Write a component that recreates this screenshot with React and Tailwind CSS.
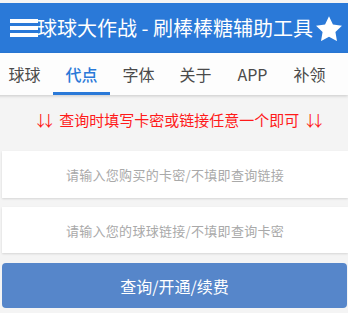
import { useState } from "react";

const tabs = ["球球", "代点", "字体", "关于", "APP", "补领"];

function MenuIcon() {
  return (
    <svg width="28" height="19" viewBox="0 0 28 19" className="shrink-0">
      <rect x="0" y="0" width="28" height="4" fill="#fff" />
      <rect x="0" y="7" width="28" height="4" fill="#fff" />
      <rect x="0" y="14" width="28" height="4" fill="#fff" />
    </svg>
  );
}

function StarIcon() {
  return (
    <svg width="26" height="25" viewBox="0.5 0.3 23 22.2" className="shrink-0">
      <path
        d="M12 0.6l3.5 7.3 8 1.1-5.8 5.6 1.4 8-7.1-3.8-7.1 3.8 1.4-8L0.5 9l8-1.1z"
        fill="#fff"
      />
    </svg>
  );
}

export default function App() {
  const [active, setActive] = useState(1);

  return (
    <div className="w-[348px] h-[313px] overflow-hidden bg-[#f4f4f4] font-['Noto_Sans_CJK_SC','Noto_Sans',sans-serif]">
      <div className="h-[3px]" />
      <header className="h-[50px] bg-[#2a79d8] flex items-center pl-[10px] pr-[6px]">
        <MenuIcon />
        <h1 className="text-white text-[20px] leading-none whitespace-nowrap -ml-[1px] flex-1">
          球球大作战 - 刷棒棒糖辅助工具
        </h1>
        <StarIcon />
      </header>

      <nav className="h-[42px] bg-[#fdfdfd] shadow-[0_1px_3px_rgba(0,0,0,0.18)] relative flex -ml-[4px]">
        {tabs.map((t, i) => (
          <button
            key={t}
            onClick={() => setActive(i)}
            className={
              "w-[57px] shrink-0 h-full relative text-[16px] " +
              (i === active ? "text-[#2a79d8] font-medium" : "text-[#4a4a4a]")
            }
          >
            {t}
            {i === active && (
              <span className="absolute left-0 right-0 bottom-[0px] h-[3px] bg-[#2a79d8]" />
            )}
          </button>
        ))}
      </nav>

      <p className="text-center text-[15px] text-[#ff1a1a] mt-[14px] leading-[22px] pl-[4px]">
        <span className="tracking-[-7px]">↓↓</span>
        <span className="ml-[10px]">查询时填写卡密或链接任意一个即可 </span>
        <span className="tracking-[-7px]">↓↓</span>
      </p>

      <div className="ml-[2px] mt-[20px] flex flex-col gap-[9px]">
        <input
          className="h-[47px] bg-white text-center text-[13px] tracking-[0.3px] outline-none shadow-[0_1px_2px_rgba(0,0,0,0.12)] placeholder:text-[#a9a9a9]"
          placeholder="请输入您购买的卡密/不填即查询链接"
        />
        <input
          className="h-[46px] bg-white text-center text-[13px] tracking-[0.3px] outline-none shadow-[0_1px_2px_rgba(0,0,0,0.12)] placeholder:text-[#a9a9a9]"
          placeholder="请输入您的球球链接/不填即查询卡密"
        />
      </div>

      <button className="mt-[10px] ml-[2px] w-[345px] h-[45px] rounded-[4px] bg-[#5686ca] text-white text-[16px]">
        查询/开通/续费
      </button>
    </div>
  );
}
